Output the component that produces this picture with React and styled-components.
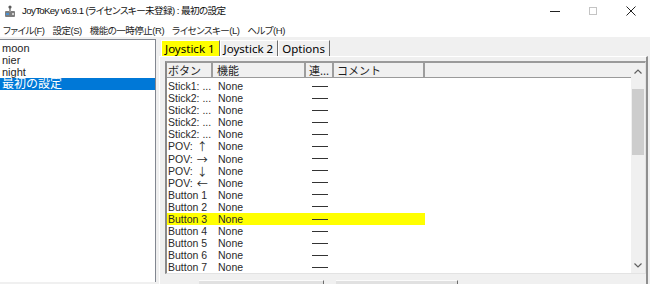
import React from 'react';
import styled, { createGlobalStyle } from 'styled-components';

const colors = {
  face: '#f0f0f0',
  text: '#1e1e1e',
  select: '#0078d7',
  highlight: '#ffff00',
  line: '#a0a0a0',
};

const GlobalStyle = createGlobalStyle`
  html, body {
    margin: 0;
    padding: 0;
    background: ${colors.face};
  }
  body {
    font-family: 'Noto Sans CJK JP', 'Noto Sans', sans-serif;
    color: ${colors.text};
  }
`;

const Window = styled.div`
  display: flex;
  flex-direction: column;
  width: 650px;
  height: 284px;
  overflow: hidden;
  background: ${colors.face};
`;

const TitleBar = styled.div`
  display: flex;
  align-items: center;
  height: 22px;
  background: #fff;
`;

const AppIcon = styled.svg`
  width: 13px;
  height: 13px;
  margin: 0 5px 0 4px;
`;

const TitleText = styled.div`
  flex: 1;
  font-family: 'Liberation Sans', 'Noto Sans CJK JP', sans-serif;
  font-size: 9.6px;
  letter-spacing: -0.6px;
  font-feature-settings: 'palt';
  line-height: 22px;
  white-space: nowrap;
  color: #111;
`;

const Controls = styled.div`
  display: flex;
  height: 22px;
`;

const ControlButton = styled.div`
  display: flex;
  align-items: center;
  justify-content: center;
  width: 38px;
  height: 22px;
  svg {
    width: 10px;
    height: 10px;
  }
`;

const MenuBar = styled.div`
  display: flex;
  align-items: center;
  height: 15px;
  padding-left: 3px;
  background: #fff;
  font-family: 'Liberation Sans', 'Noto Sans CJK JP', sans-serif;
  font-size: 9.5px;
  letter-spacing: -0.5px;
  font-feature-settings: 'palt';
`;

const MenuItem = styled.span`
  margin-right: 8px;
  white-space: nowrap;
  line-height: 15px;
  padding-top: 1px;
`;

const Main = styled.div`
  display: flex;
  flex: 1;
  padding-top: 2px;
  min-height: 0;
`;

const ProfileList = styled.div`
  display: flex;
  flex-direction: column;
  width: 156px;
  height: 243px;
  padding-top: 2px;
  background: #fff;
  border-top: 1px solid #828790;
  border-right: 1px solid #828790;
  box-sizing: border-box;
`;

const ProfileItem = styled.div`
  height: 12px;
  width: 155px;
  padding-left: 2px;
  box-sizing: border-box;
  font-family: 'Liberation Sans', 'Noto Sans CJK JP', sans-serif;
  font-size: ${(props) => (props.selected ? 12 : 11)}px;
  line-height: 12px;
  white-space: nowrap;
  background: ${(props) => (props.selected ? colors.select : 'transparent')};
  color: ${(props) => (props.selected ? '#fff' : colors.text)};
`;

const TabArea = styled.div`
  display: flex;
  flex-direction: column;
  margin-left: 3px;
  padding-top: 1px;
  flex: 1;
`;

const TabStrip = styled.div`
  display: flex;
  height: 17px;
  padding-left: 2px;
`;

const Tab = styled.div`
  display: flex;
  align-items: center;
  padding: 0 4px 0 3px;
  font-family: 'Noto Sans', sans-serif;
  font-size: 11.5px;
  color: #000;
  background: ${(props) => (props.active ? colors.highlight : colors.face)};
  border-left: 1px solid #fff;
  border-top: 1px solid #fff;
  border-right: 1px solid #6d6d6d;
  box-sizing: border-box;
  white-space: nowrap;
`;

const TabPanel = styled.div`
  display: flex;
  flex-direction: column;
  flex: 1;
  padding: 4px 0 0 5px;
  border-top: 1px solid #fff;
  border-left: 1px solid #fff;
  border-right: 2px solid #8f8f8f;
  margin-right: 2px;
`;

const ListView = styled.div`
  display: flex;
  height: 213px;
  background: #fff;
  border-top: 2px solid #9a9a9a;
  border-left: 2px solid #8a8a8a;
  border-right: 1px solid #e3e3e3;
  border-bottom: 1px solid #e3e3e3;
  box-sizing: border-box;
`;

const Table = styled.div`
  flex: 1;
  display: flex;
  flex-direction: column;
  font-family: 'Liberation Sans', 'Noto Sans CJK JP', sans-serif;
  font-size: 10.5px;
`;

const columns = '46px 93px 28px 91px';

const HeaderRow = styled.div`
  display: grid;
  grid-template-columns: ${columns} 1fr;
  height: 14px;
  background: ${colors.face};
  border-bottom: 1px solid #9a9a9a;
`;

const HeaderCell = styled.div`
  padding-left: ${(props) => props.indent}px;
  font-family: 'Noto Sans CJK JP', sans-serif;
  font-size: 11px;
  line-height: 14px;
  white-space: nowrap;
  overflow: hidden;
  border-right: ${(props) => (props.last ? 'none' : '2px solid #9d9d9d')};
`;

const Rows = styled.div`
  padding-top: 2px;
`;

const Row = styled.div`
  display: grid;
  grid-template-columns: ${columns};
  width: 258px;
  height: 12.1px;
  background: ${(props) => (props.highlight ? colors.highlight : 'transparent')};
`;

const Cell = styled.div`
  display: flex;
  align-items: center;
  padding-left: ${(props) => props.indent}px;
  height: 12px;
  white-space: nowrap;
  overflow: hidden;
  color: #2a2a2a;
`;

const Arrow = styled.span`
  margin-left: 4px;
  font-family: 'Noto Sans CJK JP', sans-serif;
  font-size: 11px;
  line-height: 12px;
`;

const DashCell = styled.div`
  display: flex;
  align-items: center;
  justify-content: center;
  &::after {
    content: '';
    width: 16px;
    border-top: 1px solid #333;
  }
`;

const ScrollBar = styled.div`
  display: flex;
  flex-direction: column;
  align-items: center;
  width: 14px;
  background: ${colors.face};
  svg {
    width: 8px;
    height: 5px;
  }
`;

const ScrollArrow = styled.div`
  display: flex;
  align-items: center;
  justify-content: center;
  height: 16px;
`;

const ScrollThumb = styled.div`
  width: 12px;
  height: 66px;
  margin-top: 10px;
  background: #cdcdcd;
`;

const ScrollSpace = styled.div`
  flex: 1;
`;

const ButtonRow = styled.div`
  display: flex;
  gap: 12px;
  padding: 6px 0 0 34px;
`;

const Button = styled.div`
  width: ${(props) => props.width}px;
  height: 20px;
  background: #e1e1e1;
  border-top: 1px solid #fbfbfb;
  border-right: 1px solid #6d6d6d;
  box-sizing: border-box;
`;

const profiles = ['moon', 'nier', 'night', '最初の設定'];

const buttons = [
  { label: 'Stick1: ...' },
  { label: 'Stick2: ...' },
  { label: 'Stick2: ...' },
  { label: 'Stick2: ...' },
  { label: 'Stick2: ...' },
  { label: 'POV:', arrow: '↑' },
  { label: 'POV:', arrow: '→' },
  { label: 'POV:', arrow: '↓' },
  { label: 'POV:', arrow: '←' },
  { label: 'Button 1' },
  { label: 'Button 2' },
  { label: 'Button 3' },
  { label: 'Button 4' },
  { label: 'Button 5' },
  { label: 'Button 6' },
  { label: 'Button 7' },
];

const App = () => {
  return (
    <>
      <GlobalStyle />
      <Window>
        <TitleBar>
          <AppIcon viewBox="0 0 13 13">
            <rect x="1" y="6" width="10" height="6" rx="1" fill="#7d7d7d" />
            <rect x="5" y="1" width="2" height="6" fill="#9a9a9a" />
            <circle cx="6" cy="2" r="1.6" fill="#5a5a5a" />
            <rect x="2" y="8" width="3" height="2" fill="#4a90d0" />
            <rect x="8" y="8" width="2" height="2" fill="#d0d0d0" />
          </AppIcon>
          <TitleText>JoyToKey v6.9.1 (ライセンスキー未登録) : 最初の設定</TitleText>
          <Controls>
            <ControlButton>
              <svg viewBox="0 0 10 10">
                <line x1="0" y1="5.5" x2="10" y2="5.5" stroke="#222" strokeWidth="1" />
              </svg>
            </ControlButton>
            <ControlButton>
              <svg viewBox="0 0 10 10">
                <rect x="1.5" y="1.5" width="7" height="7" fill="none" stroke="#c4c4c4" strokeWidth="1" />
              </svg>
            </ControlButton>
            <ControlButton>
              <svg viewBox="0 0 10 10">
                <path d="M0.5 0.5 L9.5 9.5 M9.5 0.5 L0.5 9.5" stroke="#222" strokeWidth="1" />
              </svg>
            </ControlButton>
          </Controls>
        </TitleBar>
        <MenuBar>
          <MenuItem>ファイル(F)</MenuItem>
          <MenuItem>設定(S)</MenuItem>
          <MenuItem>機能の一時停止(R)</MenuItem>
          <MenuItem>ライセンスキー(L)</MenuItem>
          <MenuItem>ヘルプ(H)</MenuItem>
        </MenuBar>
        <Main>
          <ProfileList>
            {profiles.map((name, i) => (
              <ProfileItem key={name} selected={i === profiles.length - 1}>
                {name}
              </ProfileItem>
            ))}
          </ProfileList>
          <TabArea>
            <TabStrip>
              <Tab active>Joystick 1</Tab>
              <Tab>Joystick 2</Tab>
              <Tab>Options</Tab>
            </TabStrip>
            <TabPanel>
              <ListView>
                <Table>
                  <HeaderRow>
                    <HeaderCell indent={1}>ボタン</HeaderCell>
                    <HeaderCell indent={4}>機能</HeaderCell>
                    <HeaderCell indent={3}>連...</HeaderCell>
                    <HeaderCell indent={3}>コメント</HeaderCell>
                    <HeaderCell last />
                  </HeaderRow>
                  <Rows>
                    {buttons.map((b, i) => (
                      <Row key={i} highlight={b.label === 'Button 3'}>
                        <Cell indent={1}>
                          {b.label}
                          {b.arrow && <Arrow>{b.arrow}</Arrow>}
                        </Cell>
                        <Cell indent={5}>None</Cell>
                        <DashCell />
                        <Cell />
                      </Row>
                    ))}
                  </Rows>
                </Table>
                <ScrollBar>
                  <ScrollArrow>
                    <svg viewBox="0 0 8 5">
                      <path d="M0.5 4.5 L4 1 L7.5 4.5" fill="none" stroke="#606060" strokeWidth="1.2" />
                    </svg>
                  </ScrollArrow>
                  <ScrollThumb />
                  <ScrollSpace />
                  <ScrollArrow>
                    <svg viewBox="0 0 8 5">
                      <path d="M0.5 0.5 L4 4 L7.5 0.5" fill="none" stroke="#606060" strokeWidth="1.2" />
                    </svg>
                  </ScrollArrow>
                </ScrollBar>
              </ListView>
              <ButtonRow>
                <Button width={125} />
                <Button width={122} />
              </ButtonRow>
            </TabPanel>
          </TabArea>
        </Main>
      </Window>
    </>
  );
};

export default App;
